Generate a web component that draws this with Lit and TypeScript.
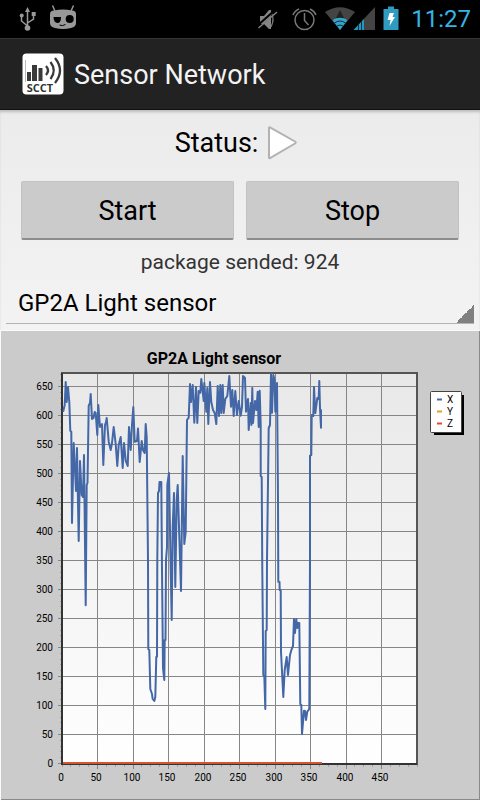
import { LitElement, css, html, svg } from "lit";
import { customElement, property, state } from "lit/decorators.js";

/* Line of the X series, in the coordinate space of the chart's viewBox. */
const SERIES_X = `63.3,411 64.7,405 65.7,382 66.7,402 68,387 69.3,402 70.3,430.7 71.3,431.7 72,523 73.7,443
76,491 77,448 78.7,541 80,461 81.7,495 83,497 84,455 85.7,605.3 86.7,485 87.5,483 88.7,405.7 90,403 90.7,394
92,419 93.5,418 94.7,412 95.7,413 97.3,435 98.3,405 100,427 102,424 103.3,465 105,425 106,422 106.7,418 108.7,441.7
110.7,450 112,443 113.7,427 115.7,444 117.3,466 118.7,445 120.7,437 122.7,468 124,443 125.7,460.7 127.7,466
129,427 130.7,450 132,425 133.3,407 134.7,441.7 137,441 138,428.5 139.7,462 141.7,441 143,450 144.7,453
145.7,424 146.7,437 148,560 148.3,649 149.3,650 150.3,689 152,694 152.7,699 154.3,701 155.3,697 156.3,657
157,656.7 157.3,560 158,493 159,491 159.5,482 161.3,482 162,570 163,668 164.3,680 164.7,640 165.5,640 166,560
167,547 167.3,485 169,473 170.7,570 171.7,620 172.7,527 174,493 175.3,587 176.7,500 177.7,485 181,591
182.7,456 184.3,544 185.7,532 187,420 188.7,417.7 190,384 191,402 192.7,385 194.3,422.7 196,387 197.3,423
198.7,391 200.3,392.7 201.3,379 202.6,391 203.7,401 204.3,383 206.3,411.7 207.3,388 208.3,424 210,382
211.3,402 213,410 214.7,413 216.3,424 217.7,386 219,416 220.3,385 221.3,413 222.7,385 223.7,413 225.3,399
227.3,396 229.3,376 231,406.7 232.3,390 233.7,416 235.3,391 237,415 238.7,401 240.7,415.7 242,407 243,376
245,378 246,411.7 248,399 248.7,430 250.7,403 251.4,425 252.3,388 253,423 255,401 256.4,410 257.7,391.7
258.7,427 259.7,390.7 260.7,425 260.7,476 261.7,477 262.3,570 263.3,675 264.3,676 265.3,709 265.7,631
266.7,630 267,560 268.7,428 270,425 271,374 272,412.7 273.3,375 274.6,380 275.3,411.7 277,383 278,500
278.3,581.7 279.5,582 279.7,590 280.7,590 281,651.7 283.3,697 284.7,670 286.7,657 288,675 290,655
291.7,649 293,646 294,619 295,633 296.3,619 297.3,628 298,623 299.3,623 300.3,704 301.3,705 302,734
304,710.7 305,711 306,720 307.3,711.7 309.3,709 310,560 310,455.7 311.3,455 311.7,415 313.3,416 314,387
315.3,413 317.3,398 318.7,399 319.3,381 320,408 321,427.7 321,410`;

const LEGEND = [
  { name: "X", color: "#4668a8" },
  { name: "Y", color: "#e0a030" },
  { name: "Z", color: "#e04a30" },
];

const PLOT = { left: 62, right: 417, top: 373, bottom: 764, maxX: 500 };

const toX = (v: number) => PLOT.left + (v * (PLOT.right - PLOT.left)) / PLOT.maxX;
const toY = (v: number) => 763.5 - v * 0.58;
const steps = (count: number, size: number) =>
  Array.from({ length: count }, (_, i) => i * size);

@customElement("sensor-chart")
class SensorChart extends LitElement {
  @property() heading = "";

  static styles = css`
    :host {
      display: block;
    }
    svg {
      display: block;
      width: 100%;
      height: auto;
      font-family: Roboto, "Liberation Sans", sans-serif;
    }
    .panel { fill: #cbcbcb; }
    .light { stroke: #fafafa; stroke-width: 2; }
    .dark { stroke: #8a8a8a; stroke-width: 2; }
    .grid { stroke: #868686; shape-rendering: crispEdges; }
    .tick { stroke: #a2a2a2; shape-rendering: crispEdges; }
    .frame { fill: none; stroke: #555; stroke-width: 2; }
    .axis { fill: none; stroke: #333; stroke-width: 2; }
    .series { fill: none; stroke: #4367a7; stroke-width: 2; stroke-linejoin: round; stroke-linecap: round; }
    .zero { stroke: #d9532f; stroke-width: 2; }
    .heading { font-size: 16px; font-weight: 700; text-anchor: middle; }
    .label { font-size: 10px; fill: #000; }
    .end { text-anchor: end; }
    .mid { text-anchor: middle; }
    .legend { fill: #fff; stroke: #444; }
  `;

  render() {
    const { left, right, top, bottom } = PLOT;
    return html`
      <svg viewBox="0 330 480 470" role="img" aria-label=${this.heading}>
        <defs>
          <linearGradient id="fade" x1="0" y1="0" x2="0" y2="1">
            <stop offset="0" stop-color="#e8e8e8" />
            <stop offset="1" stop-color="#fff" />
          </linearGradient>
        </defs>
        <rect class="panel" x="0" y="330" width="480" height="470" />
        <path class="light" d="M0 330H480M0 330V800" />
        <path class="dark" d="M480 331V800M1 800H480" />
        <text class="heading" x="214" y="364">${this.heading}</text>
        <rect x=${left} y=${top} width=${right - left} height=${bottom - top} fill="url(#fade)" />
        ${steps(68, 10).map((v) => svg`<path class="tick" d="M60 ${Math.floor(toY(v)) + 0.5}H62" />`)}
        ${steps(41, 12.5).map((v) => svg`<path class="tick" d="M${Math.floor(toX(v)) + 0.5} 764V767" />`)}
        ${steps(14, 50).map((v) => svg`
          <path class="grid" d="M58 ${Math.floor(toY(v)) + 0.5}H${right}" />
          <text class="label end" x="53" y=${Math.floor(toY(v)) + 4}>${v}</text>`)}
        ${steps(10, 50).map((v) => svg`
          <path class="grid" d="M${Math.floor(toX(v)) + 0.5} ${top}V${v ? 769 : 764}" />
          <text class="label mid" x=${Math.floor(toX(v)) - 1} y="781">${v}</text>`)}
        <rect class="frame" x="62" y="373" width="355" height="391" />
        <path class="axis" d="M62 373V764H417" />
        <polyline class="series" points=${SERIES_X} />
        <path class="zero" d="M63 763H322" />
        <rect x="434" y="395" width="30" height="40" />
        <rect class="legend" x="430.500" y="391.500" width="31" height="41" rx="1" />
        ${LEGEND.map((item, i) => svg`
          <path stroke=${item.color} stroke-width="2" d="M437 ${399.5 + i * 12}H442" />
          <text class="label" x="447" y=${403 + i * 12}>${item.name}</text>`)}
      </svg>
    `;
  }
}

@customElement("status-bar")
class StatusBar extends LitElement {
  static styles = css`
    :host {
      display: flex;
      align-items: center;
      justify-content: space-between;
      height: 38px;
      padding: 0 9px 0 18px;
      background: #000;
      color: #33b5e5;
      font-size: 24px;
      line-height: 40px;
    }
    .group { display: flex; align-items: center; }
    svg { display: block; }
    time { margin-left: 11px; }
  `;

  render() {
    return html`
      <div class="group">
        <svg width="64" height="38" viewBox="18 0 64 38" aria-hidden="true">
          <path fill="none" stroke="#999" stroke-width="1.500" d="M27.500 10V28M27.500 26L21.500 21V16M27.500 23L33.500 19V14" />
          <g fill="#999">
            <circle cx="27.500" cy="28" r="2.800" />
            <path d="M27.500 7L30 12H25Z" />
            <circle cx="21.700" cy="15.500" r="2" />
            <rect x="31.700" y="12" width="4" height="4" />
          </g>
          <path d="M52.500 5.500L55 11M73.500 5.500L71 11" stroke="#999" stroke-width="1.500" />
          <path fill="#999" d="M50 14Q50 10.500 54 10.500Q63 8.500 72 10.500Q76 10.500 76 14V23Q76 27 71 28Q63 30 55 28Q50 27 50 23Z" />
          <path fill="#000" d="M53.500 17H61Q61 23 57.500 23Q53.500 22.500 53.500 17Z" />
          <circle cx="69.700" cy="19" r="4" />
          <path d="M59.500 25Q62 26.500 65.500 24.500" fill="none" stroke="#000" />
        </svg>
      </div>
      <div class="group">
        <svg width="144" height="38" viewBox="256 0 144 38" aria-hidden="true">
          <path fill="#858585" d="M260 16H264L269 10H271V29H269L264 24H260Z" />
          <path fill="none" stroke="#777" stroke-width="1.300" d="M271 12Q275 19.500 271 27" />
          <path stroke="#000" stroke-width="2" d="M257 26L275 10" />
          <path stroke="#808080" stroke-width="1.500" d="M258.500 28L277 12" />
          <g fill="none" stroke="#777" stroke-width="1.500">
            <circle cx="304.500" cy="20" r="9.500" />
            <path d="M304.500 13V20.500L308.500 25M293 15Q294.500 11 299 9M316 15Q314.500 11 310 9" />
          </g>
          <path fill="#444" d="M325 12Q340 2.500 355 12L340 30Z" />
          <path fill="#222" d="M340 10L344 18H336Z" />
          <path fill="#33a5cc" d="M332.500 20Q340 15.500 347.500 20L340 30Z" />
          <path fill="none" stroke="#0c2e3a" d="M334.500 23Q340 19 345.500 23M337 26Q340 24 343 26" />
          <path fill="#444" d="M353.500 30L375 7V30Z" />
          <path fill="#2596be" d="M353.500 30L364 19V30Z" />
          <path stroke="#083545" d="M358.500 24V30M361.500 21V30" />
          <path fill="#2f9bc1" d="M388 6.500H394V9H398.500V30H383.500V9H388Z" />
          <path fill="#fff" d="M389.500 13H394L392.500 17H395L389.500 26L390.500 20H387.500Z" />
        </svg>
        <time>11:27</time>
      </div>
    `;
  }
}

@customElement("app-root")
class AppRoot extends LitElement {
  @state() private sent = 924;
  @state() private sensor = "GP2A Light sensor";

  static styles = css`
    :host {
      display: block;
      font-family: Roboto, "Liberation Sans", sans-serif;
      color: #000;
      background: linear-gradient(#e8e8e8, #f3f3f3 330px);
    }
    .action-bar {
      display: flex;
      align-items: center;
      gap: 10px;
      height: 72px;
      padding-left: 22px;
      box-sizing: border-box;
      background: #222;
      border-top: 1px solid #363636;
      border-bottom: 1px solid #111;
      color: #f3f3f3;
    }
    .action-bar svg { flex: none; }
    h1 {
      margin: 0;
      padding-top: 2px;
      font-size: 27px;
      line-height: 32px;
      font-weight: 400;
    }
    .logo-text {
      font-family: "Open Sans", sans-serif;
      font-size: 11px;
      font-weight: 700;
      fill: #333;
      text-anchor: middle;
    }
    main {
      box-shadow: inset 0 3px 3px -1px #bbb;
    }
    .status {
      display: flex;
      justify-content: center;
      align-items: center;
      gap: 9px;
      height: 71px;
      padding: 0 8px 6px 0;
      box-sizing: border-box;
      font-size: 27px;
    }
    .buttons {
      display: grid;
      grid-template-columns: 1fr 1fr;
      gap: 12px;
      padding: 0 21px;
    }
    button {
      height: 59px;
      border: 1px solid #c2c2c2;
      border-bottom: 2px solid #8c8c8c;
      border-radius: 2px;
      background: #cbcbcb;
      color: #000;
      font: inherit;
      font-size: 27px;
      padding: 2px 0 0;
    }
    .sent {
      margin: 0;
      height: 43px;
      line-height: 45px;
      text-align: center;
      font-size: 21px;
      color: #333;
    }
    .picker {
      padding: 0 6px 6px;
    }
    select {
      display: block;
      width: 100%;
      height: 41px;
      padding: 0 24px 0 12px;
      border: 0;
      border-bottom: 1px solid #b4b4b4;
      border-radius: 0;
      appearance: none;
      color: #000;
      font: inherit;
      font-size: 24px;
      background: linear-gradient(135deg, transparent 50%, #808080 50%) right bottom / 18px 18px no-repeat;
    }
  `;

  render() {
    return html`
      <status-bar></status-bar>
      <header class="action-bar">
        <svg width="42" height="42" viewBox="0 0 42 42" aria-hidden="true">
          <rect x="0.500" y="0.500" width="41" height="41" rx="4" fill="#fff" />
          <path d="M3.500 7V29" stroke="#bbb" />
          <g fill="#3a3a3a">
            <rect x="5" y="19" width="4" height="9" />
            <rect x="10" y="12" width="5" height="16" />
            <rect x="16.500" y="15" width="4" height="13" />
          </g>
          <g fill="none" stroke="#3a3a3a" stroke-width="2.300">
            <path d="M24 13Q28 17.500 24 22" />
            <path d="M28.500 9Q35 17.500 28.500 26" />
            <path d="M33 5Q43 17.500 33 30" />
          </g>
          <text class="logo-text" x="18" y="39">SCCT</text>
        </svg>
        <h1>Sensor Network</h1>
      </header>
      <main>
        <div class="status">
          <span>Status:</span>
          <svg width="30" height="34" viewBox="0 0 30 34" role="img" aria-label="Running">
            <path d="M2 2Q2 1 3 1.500L28 15.500Q29.500 16.500 28 17.500L3 32Q2 32.500 2 31.500Z" fill="#fff" stroke="#b2b2b2" stroke-width="2" />
          </svg>
        </div>
        <div class="buttons">
          <button type="button">Start</button>
          <button type="button">Stop</button>
        </div>
        <p class="sent">package sended: ${this.sent}</p>
        <div class="picker">
          <select aria-label="Sensor">
            <option>${this.sensor}</option>
          </select>
        </div>
        <sensor-chart .heading=${this.sensor}></sensor-chart>
      </main>
    `;
  }
}
